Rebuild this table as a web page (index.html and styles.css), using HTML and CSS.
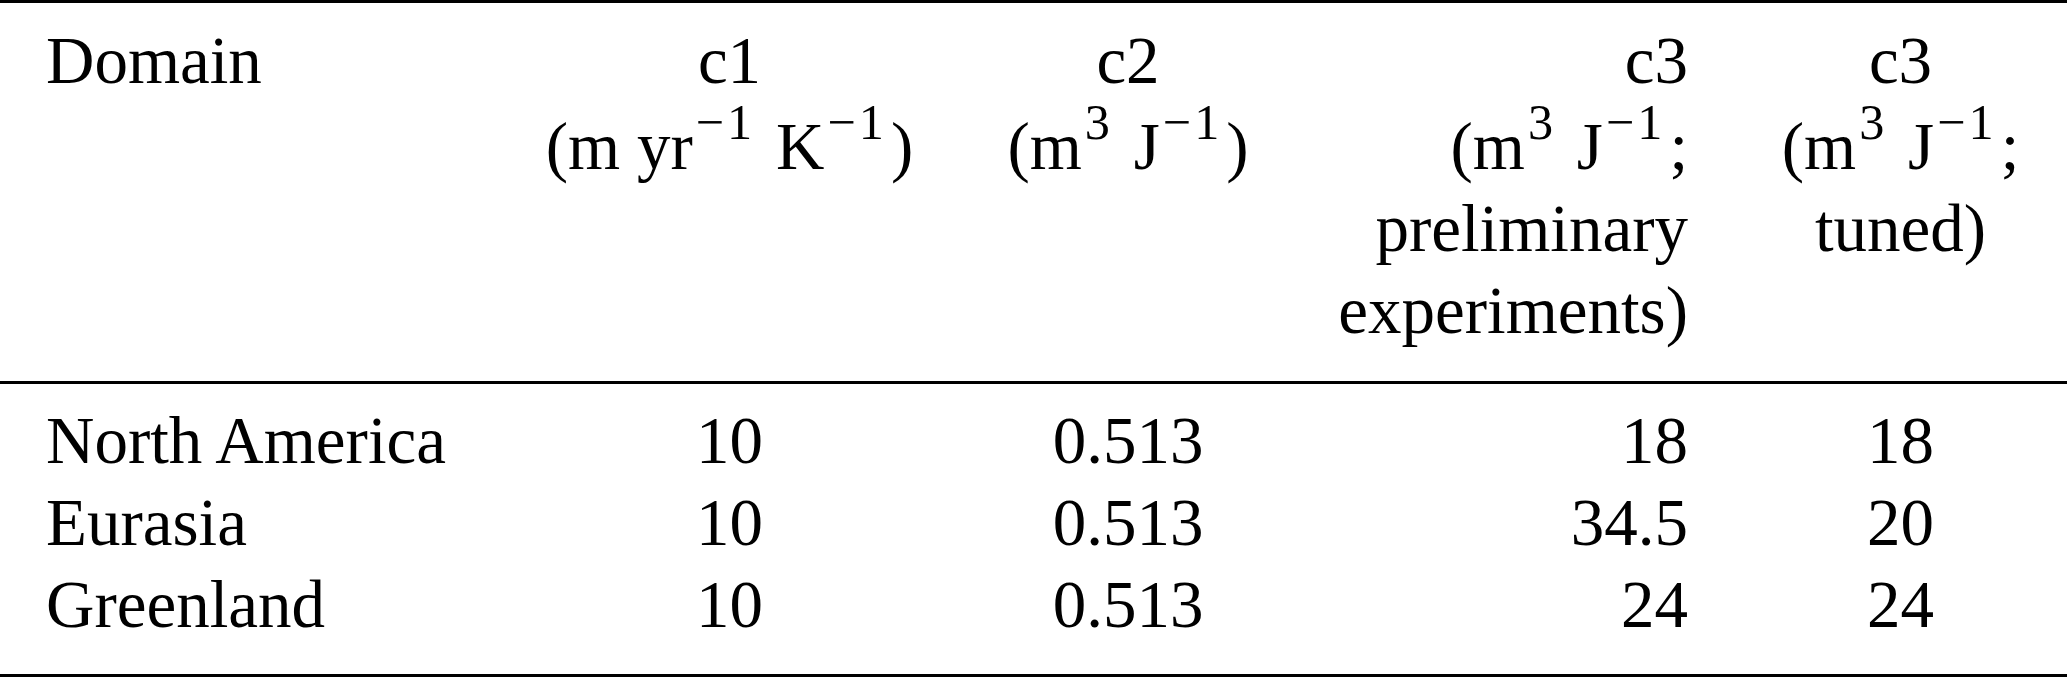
FILE: index.html
```html
<!DOCTYPE html>
<html lang="en">
<head>
    <meta charset="UTF-8">
    <title>Parameter table</title>
    <link rel="stylesheet" href="styles.css">
</head>
<body>
    <table class="params">
        <colgroup>
            <col class="col-domain">
            <col class="col-c1">
            <col class="col-c2">
            <col class="col-c3a">
            <col class="col-c3b">
        </colgroup>
        <thead>
            <tr>
                <th class="left"><span class="name">Domain</span></th>
                <th class="center"><span class="name">c1</span>(m yr<sup>−1</sup> K<sup>−1</sup>)</th>
                <th class="center"><span class="name">c2</span>(m<sup>3</sup> J<sup>−1</sup>)</th>
                <th class="right"><span class="name">c3</span>(m<sup>3</sup> J<sup>−1</sup>;<br>preliminary<br>experiments)</th>
                <th class="center"><span class="name">c3</span>(m<sup>3</sup> J<sup>−1</sup>;<br>tuned)</th>
            </tr>
        </thead>
        <tbody>
            <tr>
                <td class="left">North America</td>
                <td class="center">10</td>
                <td class="center">0.513</td>
                <td class="right">18</td>
                <td class="center">18</td>
            </tr>
            <tr>
                <td class="left">Eurasia</td>
                <td class="center">10</td>
                <td class="center">0.513</td>
                <td class="right">34.5</td>
                <td class="center">20</td>
            </tr>
            <tr>
                <td class="left">Greenland</td>
                <td class="center">10</td>
                <td class="center">0.513</td>
                <td class="right">24</td>
                <td class="center">24</td>
            </tr>
        </tbody>
    </table>
</body>
</html>
```

FILE: styles.css
```css
body {
    margin: 0;
    background-color: #ffffff;
    color: #000000;
    font-family: "Liberation Serif", "Times New Roman", serif;
}
.params {
    width: 2067px;
    table-layout: fixed;
    border-collapse: collapse;
    border-top: 3px solid #000;
    border-bottom: 3px solid #000;
    font-size: 67px;
    line-height: 82px;
}
.col-domain {
    width: 497px;
}
.col-c1 {
    width: 465px;
}
.col-c2 {
    width: 332px;
}
.col-c3a {
    width: 440px;
}
.col-c3b {
    width: 333px;
}
.params th,
.params td {
    padding: 0;
    font-weight: normal;
    vertical-align: top;
    white-space: nowrap;
}
.params thead th {
    padding-top: 16px;
    padding-bottom: 30px;
    border-bottom: 3px solid #000;
}
.params thead .name {
    display: block;
    padding-bottom: 4px;
}
.params tbody tr:first-child td {
    padding-top: 15px;
}
.params tbody tr:last-child td {
    padding-bottom: 29px;
}
.params .left {
    text-align: left;
    padding-left: 46px;
}
.params .center {
    text-align: center;
}
.params .right {
    text-align: right;
    padding-right: 46px;
}
.params sup {
    font-size: 0.75em;
    line-height: 0;
    vertical-align: 0.6em;
    letter-spacing: 0.06em;
    margin: 0 4px 0 3px;
}
```
